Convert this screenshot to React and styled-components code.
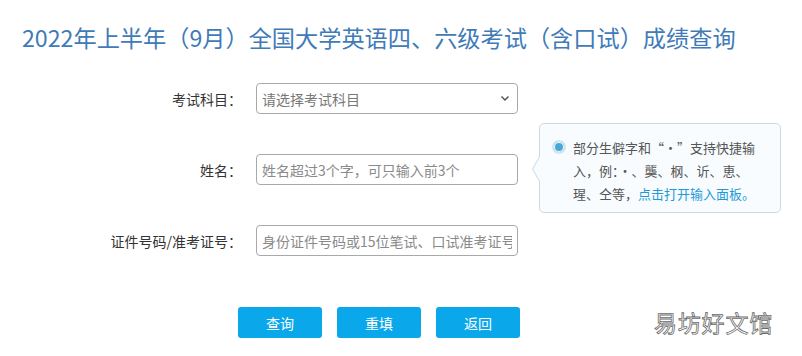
import React from "react";
import styled, { createGlobalStyle } from "styled-components";

const GlobalStyle = createGlobalStyle`
  body {
    margin: 0;
    background: #ffffff;
    font-family: "Noto Sans CJK SC", "Liberation Sans", sans-serif;
  }
`;

const Page = styled.div`
  position: relative;
  width: 802px;
  height: 356px;
  overflow: hidden;
  background: #fff;
`;

const Title = styled.h1`
  margin: 0;
  padding: 22px 0 0 22px;
  font-size: 23.2px;
  line-height: 30px;
  font-weight: 400;
  color: #3f7bb8;
  white-space: nowrap;
`;

const Form = styled.div`
  display: flex;
  flex-direction: column;
  gap: 40px;
  margin-top: 31px;
`;

const Row = styled.div`
  display: grid;
  grid-template-columns: 242px 262px;
  column-gap: 14px;
  align-items: center;
  height: 31px;
`;

const Label = styled.label`
  text-align: right;
  font-size: 14px;
  color: #333;
  white-space: nowrap;
`;

const Field = styled.div`
  position: relative;
  height: 31px;
`;

const fieldBase = `
  box-sizing: border-box;
  width: 100%;
  height: 31px;
  border: 1px solid #a9a9a9;
  border-radius: 4px;
  padding: 0 5px;
  font-family: "Noto Sans CJK SC", "Liberation Sans", sans-serif;
  font-size: 14px;
  color: #333;
  background: #fff;
  outline: none;
`;

const Select = styled.select`
  ${fieldBase}
  appearance: none;
  color: #777;
`;

const Input = styled.input`
  ${fieldBase}
  &::placeholder {
    color: #8a8a8a;
  }
`;

const Chevron = styled.svg`
  position: absolute;
  right: 8px;
  top: 12px;
  pointer-events: none;
`;

const Tip = styled.div`
  position: absolute;
  left: calc(100% + 21px);
  top: -31px;
  box-sizing: border-box;
  width: 242px;
  height: 90px;
  padding: 12px 10px 0 12px;
  display: flex;
  gap: 7px;
  background: #f8fcff;
  border: 1px solid #c9d9e6;
  border-radius: 5px;
  &::before,
  &::after {
    content: "";
    position: absolute;
    top: 31px;
    border-style: solid;
    border-width: 14px 8px 14px 0;
  }
  &::before {
    left: -8px;
    border-color: transparent #c9d9e6 transparent transparent;
  }
  &::after {
    left: -7px;
    border-color: transparent #f8fcff transparent transparent;
  }
`;

const Radio = styled.span`
  flex: none;
  box-sizing: border-box;
  width: 14px;
  height: 14px;
  margin-top: 4px;
  border-radius: 50%;
  border: 2px solid #cfe6f2;
  background: #4aa6d6;
  box-shadow: inset 0 0 0 1px #fff;
`;

const TipText = styled.p`
  margin: 0;
  width: 185px;
  font-size: 13px;
  line-height: 23px;
  color: #555;
`;

const TipLink = styled.a`
  color: #1d9bd6;
  text-decoration: none;
`;

const Buttons = styled.div`
  display: flex;
  gap: 15px;
  margin: 51px 0 0 238px;
`;

const Button = styled.button`
  width: 84px;
  height: 31px;
  border: none;
  border-radius: 3px;
  background: #0aa8ea;
  color: #fff;
  font-family: "Noto Sans CJK SC", "Liberation Sans", sans-serif;
  font-size: 14px;
  cursor: pointer;
`;

const Watermark = styled.div`
  position: absolute;
  left: 654px;
  top: 306px;
  font-size: 23px;
  line-height: 32px;
  letter-spacing: 0.8px;
  color: #fff;
  -webkit-text-stroke: 0.8px #6a6a6a;
  white-space: nowrap;
`;

export default function App() {
  return (
    <Page>
      <GlobalStyle />
      <Title>2022年上半年（9月）全国大学英语四、六级考试（含口试）成绩查询</Title>
      <Form>
        <Row>
          <Label>考试科目：</Label>
          <Field>
            <Select defaultValue="">
              <option value="">请选择考试科目</option>
            </Select>
            <Chevron width="10" height="7" viewBox="0 0 10 7">
              <path d="M1.5 1.5 L5 5 L8.5 1.5" fill="none" stroke="#555" strokeWidth="1.5" />
            </Chevron>
          </Field>
        </Row>
        <Row>
          <Label>姓名：</Label>
          <Field>
            <Input placeholder="姓名超过3个字，可只输入前3个" />
            <Tip>
              <Radio />
              <TipText>
                部分生僻字和“·”支持快捷输入，例：·、龑、㭎、䜣、恵、瑆、仝等，
                <TipLink href="#">点击打开输入面板。</TipLink>
              </TipText>
            </Tip>
          </Field>
        </Row>
        <Row>
          <Label>证件号码/准考证号：</Label>
          <Field>
            <Input placeholder="身份证件号码或15位笔试、口试准考证号" />
          </Field>
        </Row>
      </Form>
      <Buttons>
        <Button>查询</Button>
        <Button>重填</Button>
        <Button>返回</Button>
      </Buttons>
      <Watermark>易坊好文馆</Watermark>
    </Page>
  );
}
